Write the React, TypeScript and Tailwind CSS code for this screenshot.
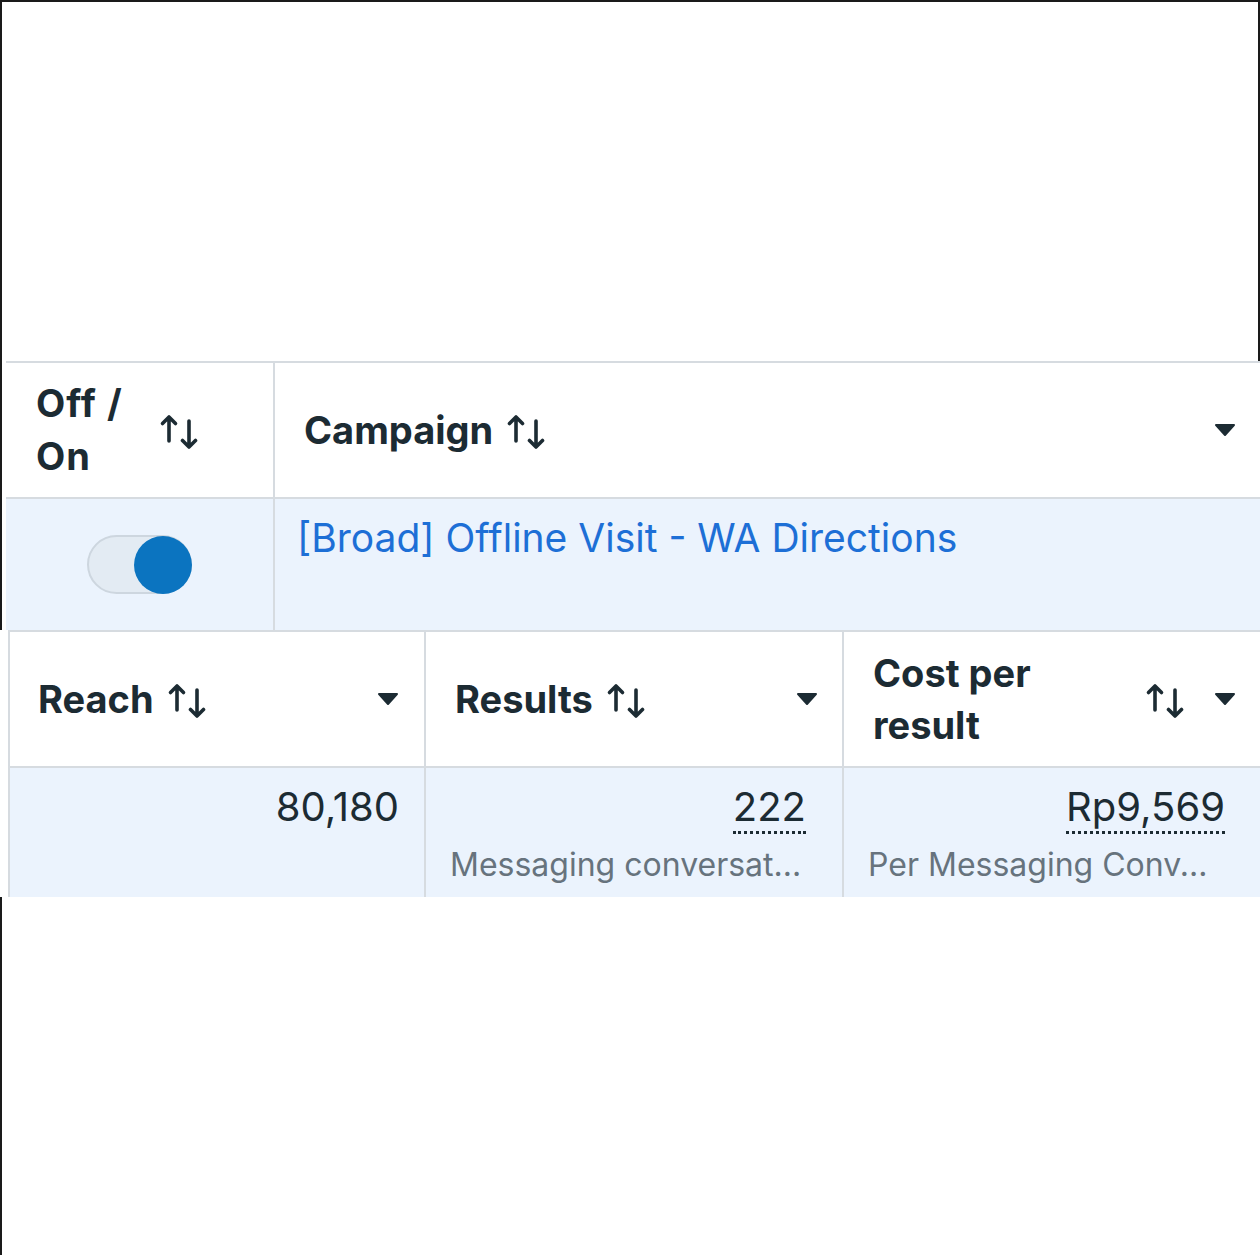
import React from "react";

const ink = "#1c2b33";

function SortIcon() {
  return (
    <svg width="44" height="36" viewBox="0 0 44 36" fill="none" stroke={ink} strokeWidth="3.6" strokeLinecap="round" strokeLinejoin="round">
      <path d="M11 28V4M4.5 10.5L11 4l6.5 6.5" />
      <path d="M31 8v26M24.5 27.5L31 34l6.5-6.5" />
    </svg>
  );
}

function Caret() {
  return (
    <svg width="22" height="14" viewBox="0 0 22 14">
      <path d="M2 2h18l-9 10z" fill={ink} stroke={ink} strokeWidth="2" strokeLinejoin="round" />
    </svg>
  );
}

function Toggle() {
  return (
    <div className="relative h-[59px] w-[105px] rounded-full border-2 border-[#cdd6df] bg-[#e3ebf3]">
      <div className="absolute right-[-2px] top-[-1px] h-[58px] w-[58px] rounded-full bg-[#0b74c0]" />
    </div>
  );
}

function Dotted({ children }: { children: React.ReactNode }) {
  return (
    <span className="border-b-[3px] border-dotted border-[#1c2b33] leading-[40px]">{children}</span>
  );
}

export default function App() {
  return (
    <div
      className="flex h-[1255px] w-[1260px] flex-col bg-white text-[#1c2b33]"
      style={{ fontFamily: "Inter, Roboto, 'Noto Sans', sans-serif" }}
    >
      <div className="h-[361px] border-l-2 border-r-2 border-t-2 border-[#1a1a1a]" />

      {/* campaign name table */}
      <div className="flex border-l-2 border-[#1a1a1a] pl-[4px]">
        <div className="flex-1 border-t-2 border-[#d6dbe0]">
          <div className="flex h-[136px] border-b-2 border-[#d6dbe0] bg-white">
            <div className="flex w-[269px] items-center border-r-2 border-[#d6dbe0] pl-[30px] text-[38px] font-bold leading-[53px]">
              <span className="w-[122px] tracking-[1px]">
                Off /<br />On
              </span>
              <span className="mt-[2px]">
                <SortIcon />
              </span>
            </div>
            <div className="flex flex-1 items-center pl-[29px] pr-[24px] text-[38px] font-bold">
              <span>Campaign</span>
              <span className="ml-[12px] mt-[2px]">
                <SortIcon />
              </span>
              <span className="ml-auto">
                <Caret />
              </span>
            </div>
          </div>
          <div className="flex h-[131px] bg-[#ebf3fd]">
            <div className="flex w-[269px] items-center justify-center border-r-2 border-[#d6dbe0]">
              <Toggle />
            </div>
            <div className="flex-1 pl-[22px] pt-[15px] text-[39px] leading-[48px] text-[#1d6fd6]">
              [Broad] Offline Visit - WA Directions
            </div>
          </div>
        </div>
      </div>

      {/* metrics table */}
      <div className="flex pl-[8px]">
        <div className="flex-1 border-l-2 border-t-2 border-[#d6dbe0]">
          <div className="flex h-[136px] border-b-2 border-[#d6dbe0] bg-white text-[38px] font-bold">
            <div className="flex w-[416px] items-center border-r-2 border-[#d6dbe0] pl-[28px] pr-[25px]">
              <span>Reach</span>
              <span className="ml-[12px] mt-[2px]">
                <SortIcon />
              </span>
              <span className="ml-auto">
                <Caret />
              </span>
            </div>
            <div className="flex w-[418px] items-center border-r-2 border-[#d6dbe0] pl-[29px] pr-[24px]">
              <span>Results</span>
              <span className="ml-[12px] mt-[2px]">
                <SortIcon />
              </span>
              <span className="ml-auto">
                <Caret />
              </span>
            </div>
            <div className="flex flex-1 items-center pl-[29px] pr-[24px] leading-[52px]">
              <span>
                Cost per
                <br />
                result
              </span>
              <span className="ml-auto mt-[2px]">
                <SortIcon />
              </span>
              <span className="ml-[26px]">
                <Caret />
              </span>
            </div>
          </div>
          <div className="flex h-[129px] bg-[#ebf3fd] text-[40px]">
            <div className="w-[416px] border-r-2 border-[#d6dbe0] pr-[25px] pt-[17px] text-right leading-[44px]">
              80,180
            </div>
            <div className="flex w-[418px] flex-col border-r-2 border-[#d6dbe0] pl-[24px] pr-[36px] pt-[17px]">
              <div className="text-right leading-[44px]">
                <Dotted>222</Dotted>
              </div>
              <div className="mt-[16px] text-[32px] leading-[40px] text-[#67737d]">Messaging conversat...</div>
            </div>
            <div className="flex flex-1 flex-col pl-[24px] pr-[35px] pt-[17px]">
              <div className="text-right leading-[44px]">
                <Dotted>Rp9,569</Dotted>
              </div>
              <div className="mt-[16px] text-[32px] leading-[40px] text-[#67737d]">Per Messaging Conv...</div>
            </div>
          </div>
        </div>
      </div>

      <div className="flex-1 border-l-2 border-[#1a1a1a]" />
    </div>
  );
}
